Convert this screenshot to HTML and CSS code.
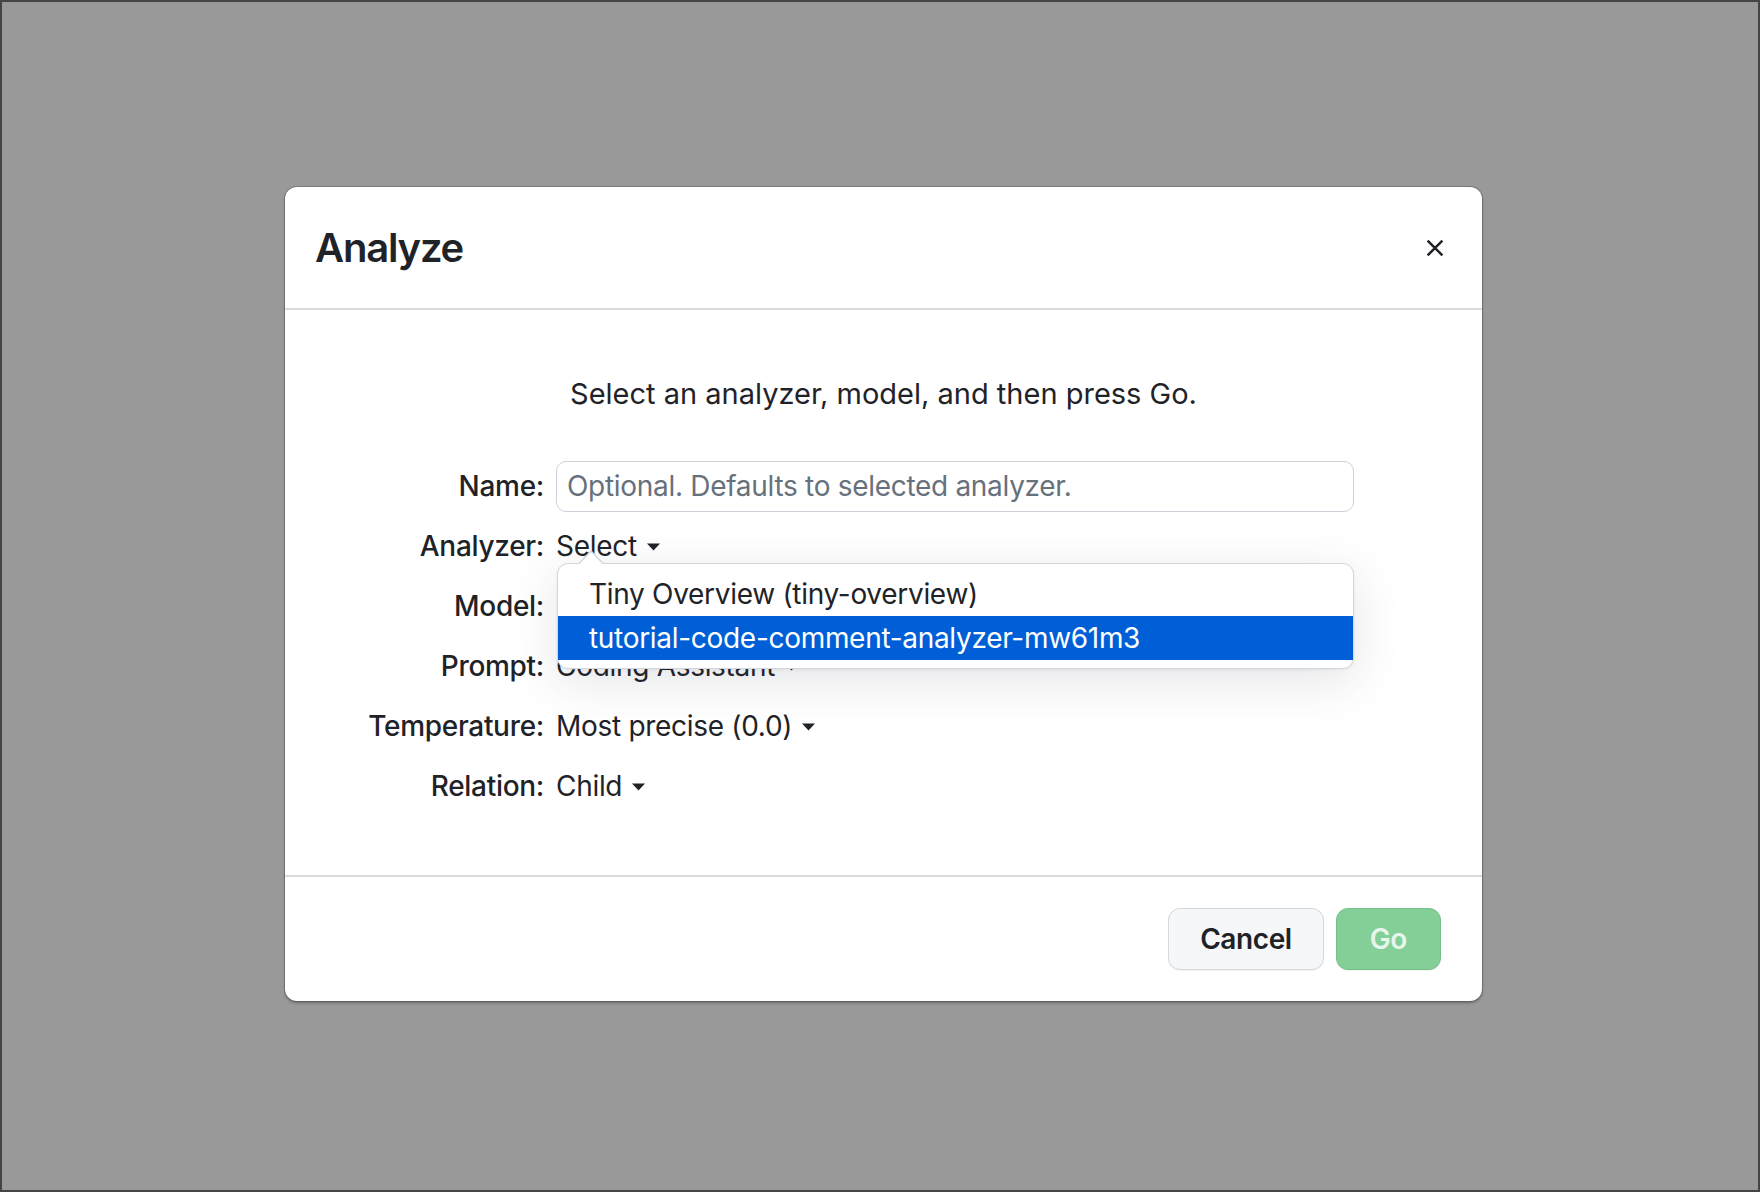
FILE: index.html
```html
<!DOCTYPE html>
<html lang="en">
<head>
<meta charset="utf-8">
<title>Analyze</title>
<link rel="stylesheet" href="styles.css">
</head>
<body>
<div class="backdrop">
  <div class="modal" role="dialog" aria-labelledby="dlg-title">
    <div class="modal-header">
      <h1 id="dlg-title" class="modal-title">Analyze</h1>
      <button class="close-btn" aria-label="Close">
        <svg width="18" height="18" viewBox="0 0 18 18"><path d="M1.6 1.6 L16.4 16.4 M16.4 1.6 L1.6 16.4" stroke="#1f2328" stroke-width="2.5" fill="none"/></svg>
      </button>
    </div>
    <div class="modal-body">
      <p class="intro">Select an analyzer, model, and then press Go.</p>
      <div class="form">
        <label class="label">Name:</label>
        <div class="value"><input class="text-input" type="text" placeholder="Optional. Defaults to selected analyzer."></div>

        <label class="label">Analyzer:</label>
        <div class="value has-menu">
          <span class="select">Select<svg class="caret" width="13" height="8" viewBox="0 0 13 8"><path d="M0 0.5 H13 L6.5 7.5 Z" fill="#1f2328"/></svg></span>
          <div class="menu">
            <svg class="menu-arrow" width="26" height="14" viewBox="0 0 26 14"><path d="M0 14.5 L13 1 L26 14.5" fill="#fff" stroke="#d0d7de" stroke-width="1.5"/></svg>
            <div class="menu-item">Tiny Overview (tiny-overview)</div>
            <div class="menu-item selected">tutorial-code-comment-analyzer-mw61m3</div>
          </div>
        </div>

        <label class="label">Model:</label>
        <div class="value"><span class="select">Select<svg class="caret" width="13" height="8" viewBox="0 0 13 8"><path d="M0 0.5 H13 L6.5 7.5 Z" fill="#1f2328"/></svg></span></div>

        <label class="label">Prompt:</label>
        <div class="value"><span class="select">Coding Assistant<svg class="caret" width="13" height="8" viewBox="0 0 13 8"><path d="M0 0.5 H13 L6.5 7.5 Z" fill="#1f2328"/></svg></span></div>

        <label class="label">Temperature:</label>
        <div class="value"><span class="select">Most precise (0.0)<svg class="caret" width="13" height="8" viewBox="0 0 13 8"><path d="M0 0.5 H13 L6.5 7.5 Z" fill="#1f2328"/></svg></span></div>

        <label class="label">Relation:</label>
        <div class="value"><span class="select">Child<svg class="caret" width="13" height="8" viewBox="0 0 13 8"><path d="M0 0.5 H13 L6.5 7.5 Z" fill="#1f2328"/></svg></span></div>
      </div>
    </div>
    <div class="modal-footer">
      <button class="btn btn-default">Cancel</button>
      <button class="btn btn-primary" disabled>Go</button>
    </div>
  </div>
</div>
</body>
</html>
```

FILE: styles.css
```css
* { box-sizing: border-box; }

html, body {
  margin: 0;
  padding: 0;
}

body {
  width: 1760px;
  height: 1192px;
  overflow: hidden;
  font-family: Inter, "Noto Sans", "Liberation Sans", sans-serif;
  color: #1f2328;
}

.backdrop {
  width: 1760px;
  height: 1192px;
  background: #999999;
  border: 2px solid #454545;
  padding: 185px 0 0 283px;
}

.modal {
  width: 1197px;
  background: #fff;
  border-radius: 12px;
  box-shadow: 0 0 0 1px rgba(70, 70, 70, 0.35), 0 2px 3px rgba(0, 0, 0, 0.3);
}

.modal-header {
  height: 123px;
  display: flex;
  align-items: center;
  justify-content: space-between;
  padding: 0 38px 0 30px;
  border-bottom: 2px solid #dadada;
}

.modal-title {
  margin: 0;
  font-size: 40px;
  font-weight: 600;
  letter-spacing: -1.2px;
}

.close-btn {
  border: 0;
  background: none;
  padding: 0;
  width: 18px;
  height: 18px;
  display: flex;
}

.modal-body {
  padding: 63px 128px 64px 40px;
}

.intro {
  margin: 0 -88px 46px 0;
  text-align: center;
  font-size: 29px;
  line-height: 42px;
}

.form {
  display: grid;
  grid-template-columns: 1fr 798px;
  grid-auto-rows: 50px;
  column-gap: 12px;
  row-gap: 10px;
  align-items: center;
  font-size: 28px;
  letter-spacing: -0.3px;
}

.label {
  text-align: right;
  font-weight: 500;
}

.value {
  display: flex;
  align-items: center;
  height: 100%;
}

.has-menu { position: relative; }

.text-input {
  width: 100%;
  height: 51px;
  border: 1.5px solid #cdd3da;
  border-radius: 10px;
  padding: 0 10px;
  font: inherit;
  font-size: 28px;
  letter-spacing: -0.3px;
  color: #1f2328;
  outline: none;
}

.text-input::placeholder { color: #67717c; }

.select {
  display: inline-flex;
  align-items: center;
  gap: 10px;
  white-space: nowrap;
}

.caret { flex: none; margin-top: 2px; }

.menu {
  position: absolute;
  top: 42px;
  left: 1px;
  right: 0;
  z-index: 5;
  background: #fff;
  border: 1.5px solid #d0d7de;
  border-radius: 11px;
  padding: 8px 0 7.5px;
  box-shadow: 0 12px 48px rgba(66, 74, 83, 0.14), 0 1px 3px rgba(31, 35, 40, 0.06);
}

.menu-arrow {
  position: absolute;
  top: -14px;
  left: 20px;
}

.menu-item {
  height: 44px;
  line-height: 44px;
  padding-left: 31px;
  white-space: nowrap;
}

.menu-item.selected {
  background: #005fd7;
  color: #fff;
}

.modal-footer {
  display: flex;
  justify-content: flex-end;
  gap: 12px;
  padding: 31px 41px 31px 0;
  border-top: 2px solid #dadada;
}

.btn {
  height: 62px;
  border-radius: 12px;
  padding: 0 31px;
  font: inherit;
  font-size: 28px;
  font-weight: 600;
  letter-spacing: -0.4px;
  box-shadow: 0 1px 0 rgba(31, 35, 40, 0.05);
}

.btn-default {
  background: #f5f7f9;
  border: 1.5px solid #d3d8dd;
  color: #1f2328;
}

.btn-primary {
  padding: 0 33px;
  background: #83cf97;
  border: 1.5px solid #77bf8a;
  color: rgba(255, 255, 255, 0.82);
}
```
